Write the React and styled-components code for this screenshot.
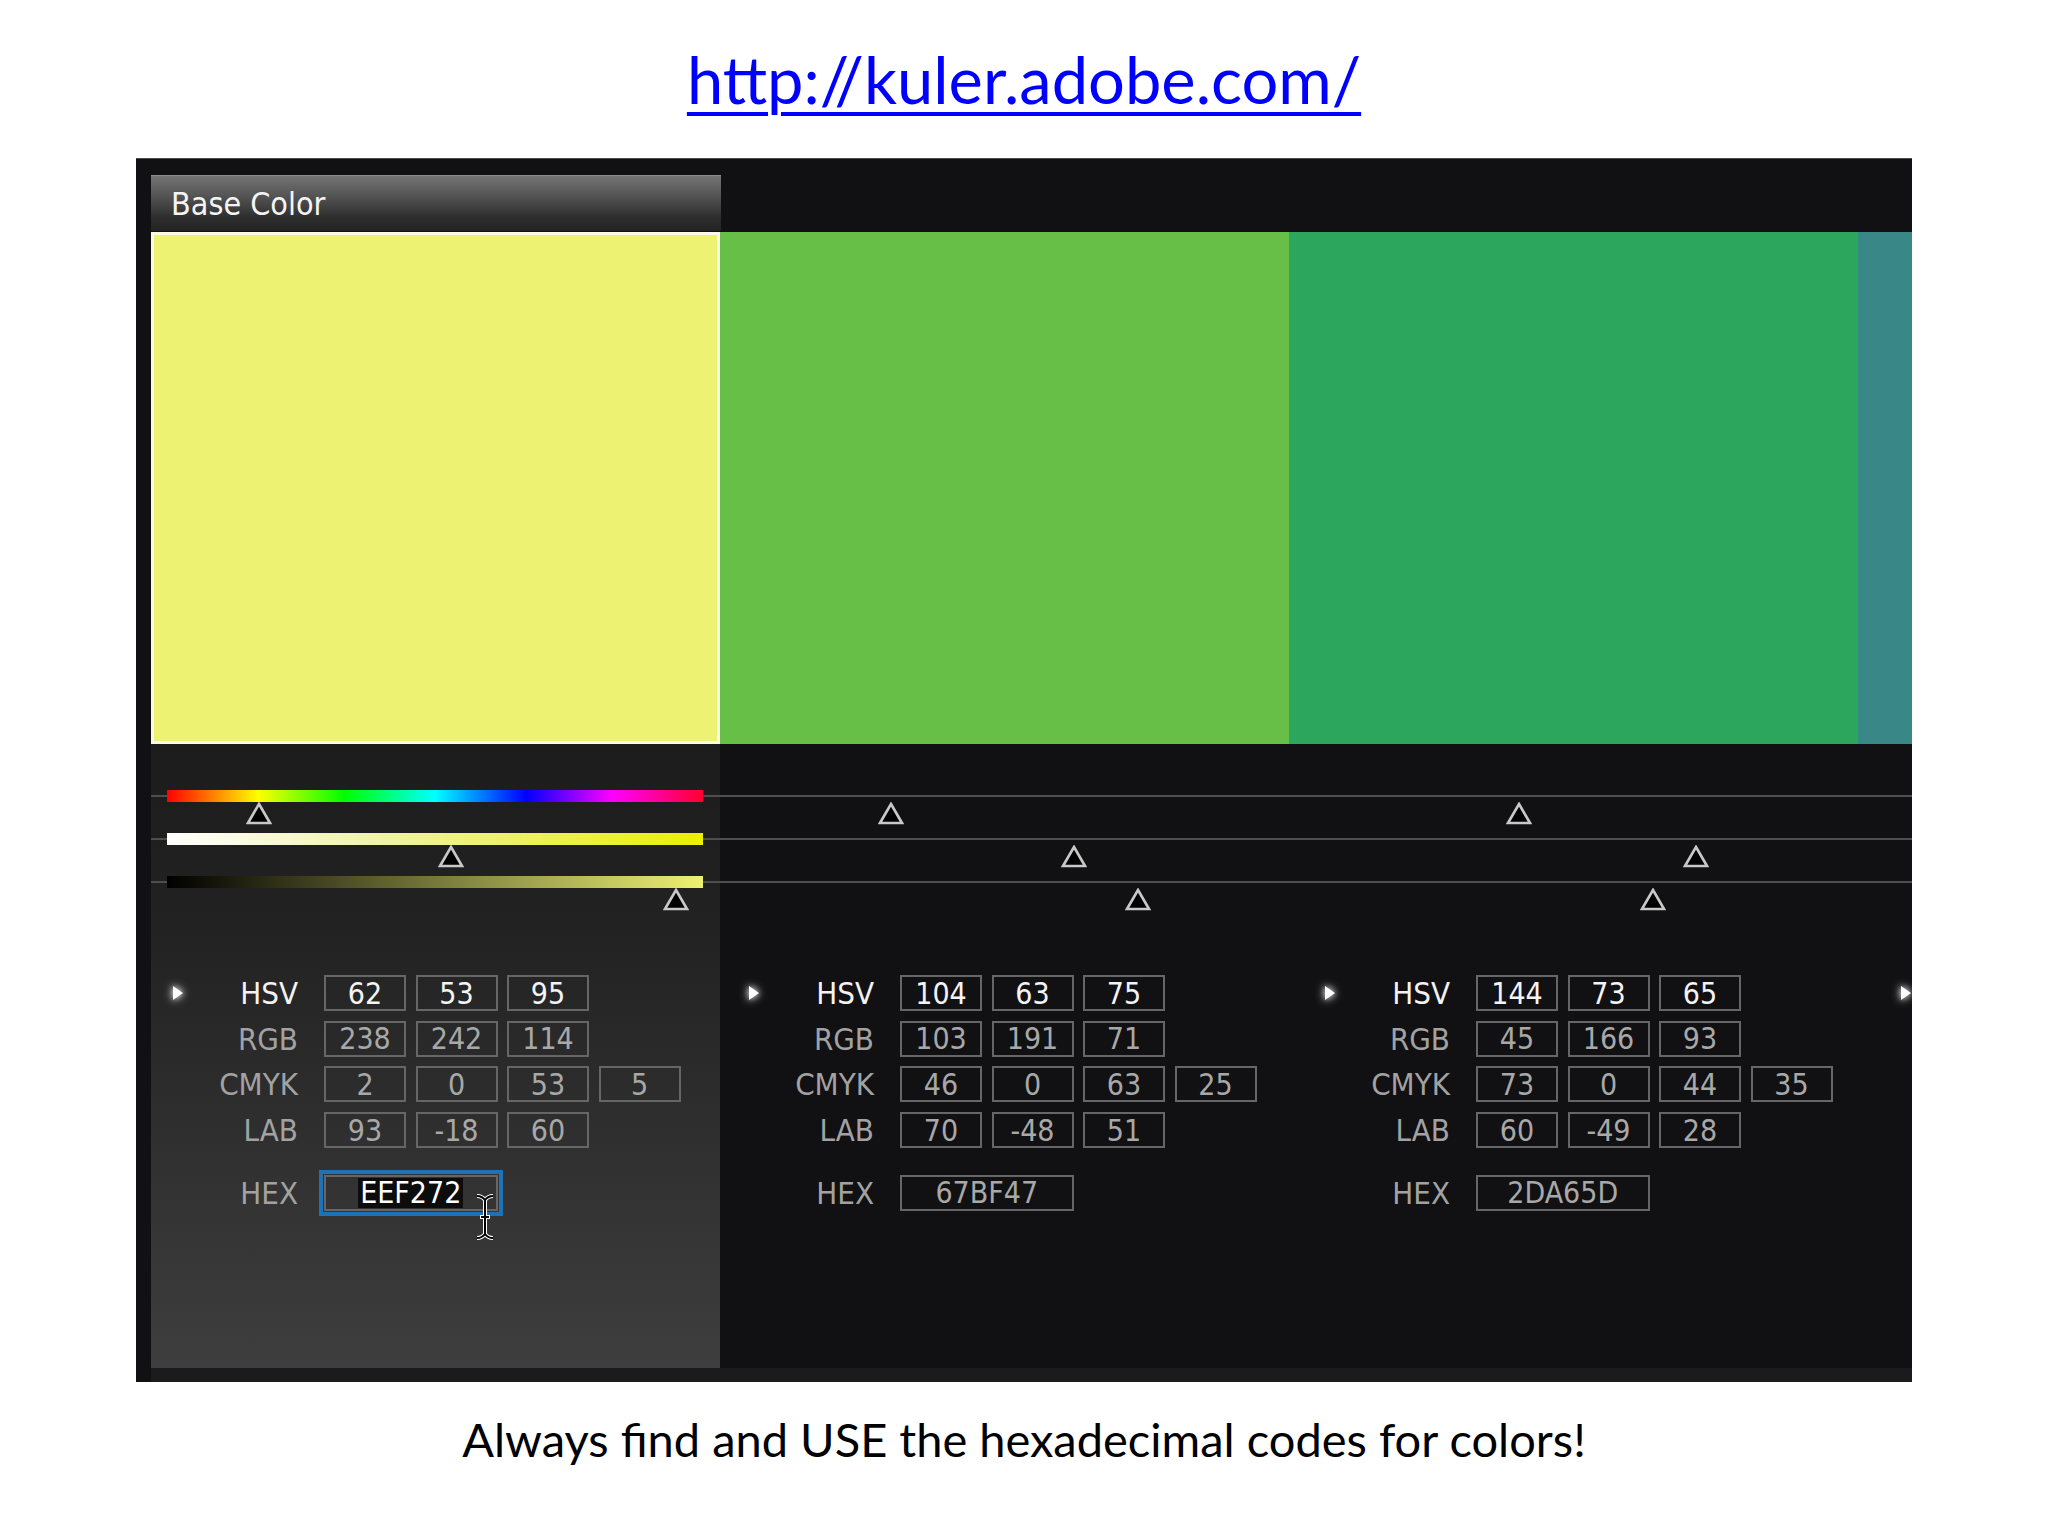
import React from 'react';
import styled, { createGlobalStyle } from 'styled-components';

const GlobalStyle = createGlobalStyle`
  html, body { margin: 0; padding: 0; background: #fff; }
`;

const colors = [
  { hex: 'EEF272', swatch: '#EEF272', hsv: [62, 53, 95], rgb: [238, 242, 114], cmyk: [2, 0, 53, 5], lab: [93, -18, 60], base: true },
  { hex: '67BF47', swatch: '#67BF47', hsv: [104, 63, 75], rgb: [103, 191, 71], cmyk: [46, 0, 63, 25], lab: [70, -48, 51] },
  { hex: '2DA65D', swatch: '#2DA65D', hsv: [144, 73, 65], rgb: [45, 166, 93], cmyk: [73, 0, 44, 35], lab: [60, -49, 28] },
  // only the left edge of this one shows inside the panel
  { hex: '3A8788', swatch: '#3A8788', hsv: [181, 57, 53], rgb: [58, 135, 136], cmyk: [57, 1, 0, 47], lab: [52, -24, -8], clipped: true },
];

const ui = '"DejaVu Sans Condensed", "DejaVu Sans", sans-serif';

const Page = styled.div`
  width: 2048px;
  height: 1536px;
  display: flex;
  flex-direction: column;
  align-items: center;
  background: #fff;
`;

const Link = styled.a`
  margin-top: 40px;
  font-family: Lato, "Open Sans", sans-serif;
  font-size: 65px;
  line-height: 1.2;
  color: #0000ff;
  text-decoration: underline;
  text-decoration-thickness: 4px;
  text-underline-offset: 8px;
`;

const Panel = styled.div`
  margin-top: 40px;
  width: 1776px;
  height: 1224px;
  box-sizing: border-box;
  background: #111013;
  border-top: 1px solid #4a4a4a;
  padding: 16px 0 0 15px;
  overflow: hidden;
  display: flex;
  flex-direction: column;
`;

const Tab = styled.div`
  width: 570px;
  height: 56px;
  box-sizing: border-box;
  margin-bottom: 1px;
  padding-left: 20px;
  display: flex;
  align-items: center;
  background: linear-gradient(to bottom, #747474 0%, #555 35%, #2e2e2e 75%, #232323 100%);
  border-top: 1px solid #8a8a8a;
  color: #f4f4f4;
  font-family: ${ui};
  font-stretch: condensed;
  font-size: 32px;
`;

const SwatchRow = styled.div`
  display: flex;
  height: 512px;
  flex-shrink: 0;
`;

const Swatch = styled.div`
  width: 569px;
  flex-shrink: 0;
  box-sizing: border-box;
  background: ${p => p.$color};
  border: ${p => (p.$base ? '3px solid #f8f8e6' : 'none')};
`;

const Lower = styled.div`
  flex: 1;
  background:
    linear-gradient(to bottom, #1c1c1c 0%, #222 30%, #303030 65%, #3e3e3e 100%) 0 0 / 569px 100% no-repeat,
    #111013;
`;

const SliderRow = styled.div`
  display: flex;
  padding-top: 46px;
`;

const SliderColumn = styled.div`
  width: 569px;
  flex-shrink: 0;
`;

const Track = styled.div`
  position: relative;
  height: 43px;
  &::before {
    content: '';
    position: absolute;
    left: 0;
    right: 0;
    top: 5px;
    height: 2px;
    background: #4e4e4e;
  }
`;

const Bar = styled.div`
  position: relative;
  margin: 0 17px 0 16px;
  height: 12px;
  background: ${p => p.$fill};
`;

const Spacer = styled.div`
  height: 12px;
`;

const Thumb = styled.svg`
  position: absolute;
  top: 12px;
  width: 26px;
  height: 23px;
  z-index: 2;
`;

const ValueRow = styled.div`
  display: flex;
  margin-top: 56px;
`;

const ValueColumn = styled.div`
  width: ${p => (p.$base ? 569 : 576)}px;
  margin-right: ${p => (p.$base ? 7 : 0)}px;
  flex-shrink: 0;
  display: flex;
  flex-direction: column;
  gap: 9.7px;
`;

const Row = styled.div`
  display: flex;
  align-items: center;
  height: 36px;
  margin-top: ${p => (p.$hex ? 17 : 0)}px;
`;

const Label = styled.div`
  width: 147px;
  margin-right: 26px;
  display: flex;
  align-items: center;
  justify-content: flex-end;
  position: relative;
  font-family: ${ui};
  font-stretch: condensed;
  font-size: 31px;
  color: ${p => (p.$bright ? '#f2f2f2' : '#a2a2a2')};
`;

const Arrow = styled.svg`
  position: absolute;
  left: 21px;
  top: 50%;
  transform: translateY(-50%);
  width: 12px;
  height: 16px;
  filter: drop-shadow(0 0 3px rgba(255, 255, 255, 0.9)) drop-shadow(0 0 5px rgba(255, 255, 255, 0.5));
`;

const Boxes = styled.div`
  display: flex;
  gap: 9.5px;
`;

const Box = styled.div`
  position: relative;
  width: ${p => p.$w || 82}px;
  height: 36px;
  box-sizing: border-box;
  border: 2px solid #666;
  display: flex;
  align-items: center;
  justify-content: center;
  font-family: ${ui};
  font-stretch: condensed;
  font-size: 30px;
  color: ${p => (p.$bright ? '#f4f4f4' : '#a8a8a8')};
  outline: ${p => (p.$active ? '4px solid #1d72b8' : 'none')};
  outline-offset: 1px;
`;

const Selected = styled.span`
  background: #0c0c0c;
  color: #fff;
  padding: 0 2px;
  line-height: 30px;
`;

const Cursor = styled.svg`
  position: absolute;
  left: 148px;
  top: 16px;
  width: 22px;
  height: 48px;
`;

const BottomStrip = styled.div`
  height: 14px;
  flex-shrink: 0;
  background: #1b1a1d;
`;

const Caption = styled.div`
  margin-top: 29px;
  font-family: Lato, "Open Sans", sans-serif;
  font-size: 47px;
  line-height: 1.2;
  color: #000;
`;

const hueFill = 'linear-gradient(to right, #ff0000 0%, #ffff00 17%, #00ff00 33%, #00ffff 50%, #0000ff 67%, #ff00ff 83%, #ff0030 100%)';
const satFill = 'linear-gradient(to right, #ffffff 0%, #f0f3a8 40%, #e9f000 100%)';
const valFill = 'linear-gradient(to right, #000000 0%, #3a3b1c 25%, #8e9146 60%, #eef272 100%)';

const thumbLeft = frac => `${16 + frac * 536 - 13}px`;

const ThumbIcon = ({ frac }) => (
  <Thumb viewBox="0 0 26 23" style={{ left: thumbLeft(frac) }}>
    <polygon points="13,2 24,21 2,21" fill="#000" stroke="#c8c8c8" strokeWidth="2.6" strokeLinejoin="miter" />
  </Thumb>
);

const PlayArrow = () => (
  <Arrow viewBox="0 0 12 16">
    <polygon points="1,1 11,8 1,15" fill="#fff" />
  </Arrow>
);

const Sliders = ({ c }) => {
  const fr = [c.hsv[0] / 360, c.hsv[1] / 100, c.hsv[2] / 100];
  const fills = [hueFill, satFill, valFill];
  return (
    <SliderColumn>
      {fr.map((f, i) => (
        <Track key={i}>
          {c.base ? <Bar $fill={fills[i]} /> : <Spacer />}
          {!c.clipped && <ThumbIcon frac={f} />}
        </Track>
      ))}
    </SliderColumn>
  );
};

const Values = ({ c }) => {
  if (c.clipped) {
    return (
      <ValueColumn>
        <Row>
          <Label>
            <PlayArrow />
          </Label>
        </Row>
      </ValueColumn>
    );
  }
  const rows = [
    ['HSV', c.hsv],
    ['RGB', c.rgb],
    ['CMYK', c.cmyk],
    ['LAB', c.lab],
  ];
  return (
    <ValueColumn $base={c.base}>
      {rows.map(([name, vals], i) => (
        <Row key={name}>
          <Label $bright={i === 0}>
            {i === 0 && <PlayArrow />}
            {name}
          </Label>
          <Boxes>
            {vals.map((v, j) => (
              <Box key={j} $bright={i === 0}>{v}</Box>
            ))}
          </Boxes>
        </Row>
      ))}
      <Row $hex>
        <Label>HEX</Label>
        <Box $w={173.5} $active={c.base}>
          {c.base ? <Selected>{c.hex}</Selected> : c.hex}
          {c.base && (
            <Cursor viewBox="0 0 22 48">
              <path d="M3 3 Q8 3 11 7 Q14 3 19 3 M11 7 V41 M3 45 Q8 45 11 41 Q14 45 19 45 M6 24 H16" stroke="#fff" strokeWidth="4" fill="none" />
              <path d="M3 3 Q8 3 11 7 Q14 3 19 3 M11 7 V41 M3 45 Q8 45 11 41 Q14 45 19 45 M7 24 H15" stroke="#000" strokeWidth="2" fill="none" />
            </Cursor>
          )}
        </Box>
      </Row>
    </ValueColumn>
  );
};

export default function App() {
  return (
    <>
      <GlobalStyle />
      <Page>
        <Link href="#">http://kuler.adobe.com/</Link>
        <Panel>
          <Tab>Base Color</Tab>
          <SwatchRow>
            {colors.map(c => (
              <Swatch key={c.hex} $color={c.swatch} $base={c.base} />
            ))}
          </SwatchRow>
          <Lower>
            <SliderRow>
              {colors.map(c => (
                <Sliders key={c.hex} c={c} />
              ))}
            </SliderRow>
            <ValueRow>
              {colors.map(c => (
                <Values key={c.hex} c={c} />
              ))}
            </ValueRow>
          </Lower>
          <BottomStrip />
        </Panel>
        <Caption>Always find and USE the hexadecimal codes for colors!</Caption>
      </Page>
    </>
  );
}
